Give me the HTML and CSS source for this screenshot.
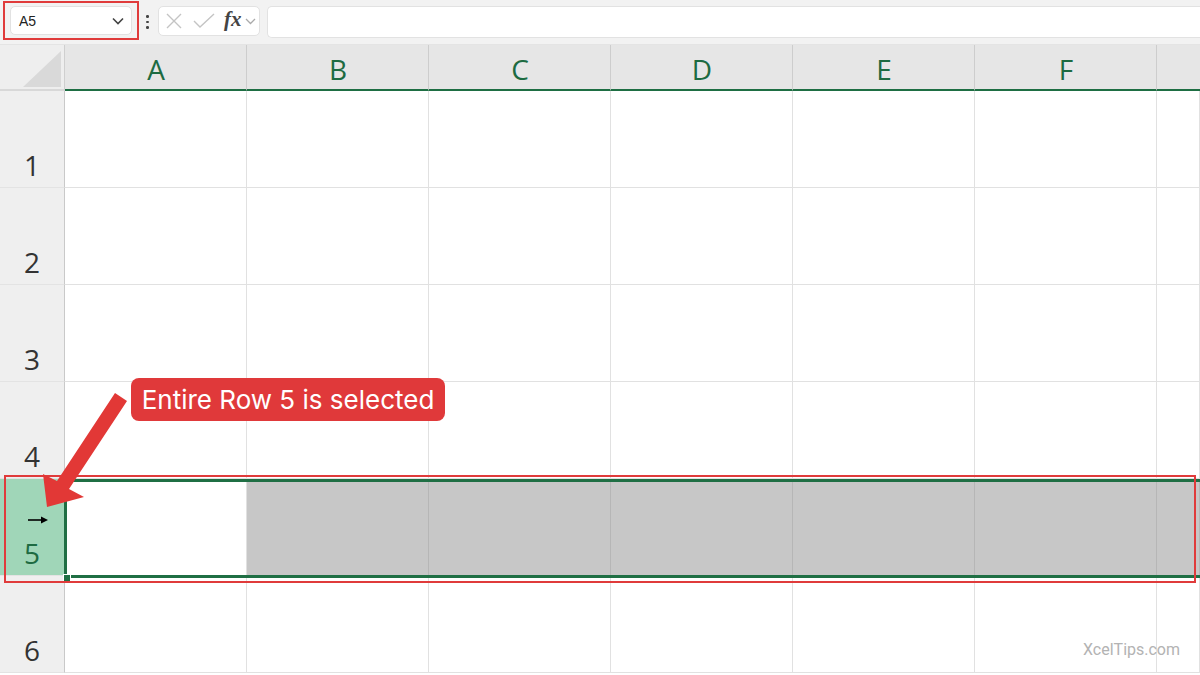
FILE: index.html
```html
<!DOCTYPE html>
<html>
<head>
<meta charset="utf-8">
<link rel="stylesheet" href="styles.css">
</head>
<body>
<div class="toolbar">
  <div class="namebox-wrap">
    <div class="namebox">
      <span class="nb-text">A5</span>
      <svg class="chev" width="12" height="8" viewBox="0 0 12 8"><path d="M1 1.5 L6 6.5 L11 1.5" fill="none" stroke="#444" stroke-width="1.6"/></svg>
    </div>
  </div>
  <div class="dots"><span></span><span></span><span></span></div>
  <div class="fbtns">
    <svg class="ic-x" width="16" height="16" viewBox="0 0 16 16"><path d="M1 1 L15 15 M15 1 L1 15" stroke="#c4c4c4" stroke-width="1.4"/></svg>
    <svg class="ic-ok" width="22" height="16" viewBox="0 0 22 16"><path d="M1 8 L7 14 L21 1" fill="none" stroke="#c4c4c4" stroke-width="1.4"/></svg>
    <span class="fx">fx</span>
    <svg width="11" height="7" viewBox="0 0 11 7"><path d="M1 1 L5.5 5.5 L10 1" fill="none" stroke="#aaa" stroke-width="1.3"/></svg>
  </div>
  <div class="finput"></div>
</div>

<div class="sheet">
  <div class="corner"><div class="tri"></div></div>
  <div class="colh">A</div><div class="colh">B</div><div class="colh">C</div><div class="colh">D</div><div class="colh">E</div><div class="colh">F</div><div class="colh last"></div>

  <div class="rowh">1</div><div class="c"></div><div class="c"></div><div class="c"></div><div class="c"></div><div class="c"></div><div class="c"></div><div class="c"></div>
  <div class="rowh">2</div><div class="c"></div><div class="c"></div><div class="c"></div><div class="c"></div><div class="c"></div><div class="c"></div><div class="c"></div>
  <div class="rowh">3</div><div class="c"></div><div class="c"></div><div class="c"></div><div class="c"></div><div class="c"></div><div class="c"></div><div class="c"></div>
  <div class="rowh">4</div><div class="c"></div><div class="c"></div><div class="c"></div><div class="c"></div><div class="c"></div><div class="c"></div><div class="c"></div>
  <div class="rowh sel">5</div><div class="c active"></div><div class="c gray"></div><div class="c gray"></div><div class="c gray"></div><div class="c gray"></div><div class="c gray"></div><div class="c gray"></div>
  <div class="rowh">6</div><div class="c"></div><div class="c"></div><div class="c"></div><div class="c"></div><div class="c"></div><div class="c"></div><div class="c"></div>
</div>

<div class="namebox-hl"></div>
<div class="row-sel"></div>
<div class="fill-handle"></div>
<div class="row-hl"></div>

<svg class="cursor" width="22" height="10" viewBox="0 0 22 10"><path d="M0 5 H15" stroke="#000" stroke-width="1.6"/><path d="M13 1.5 L20 5 L13 8.5 Z" fill="#000"/></svg>

<svg class="arrow" width="1200" height="675" viewBox="0 0 1200 675"><polygon points="115,393 127,401 69,489 84,497 47,507 43,474 57,481" fill="#e23836"/></svg>

<div class="callout">Entire Row 5 is selected</div>
<div class="watermark">XcelTips.com</div>
</body>
</html>
```

FILE: styles.css
```css
html, body {
  margin: 0;
  padding: 0;
  width: 1200px;
  height: 675px;
  overflow: hidden;
  background: #fff;
  font-family: "Open Sans", "Noto Sans", sans-serif;
  position: relative;
}

.toolbar {
  height: 45px;
  box-sizing: border-box;
  background: #f2f2f2;
  display: flex;
  align-items: flex-start;
  padding-top: 6px;
  border-bottom: 1px solid #e4e4e4;
}

.namebox-wrap {
  width: 138px;
  padding-left: 10px;
  box-sizing: border-box;
}

.namebox {
  width: 122px;
  height: 29px;
  box-sizing: border-box;
  background: #fff;
  border: 1px solid #e2e2e2;
  border-radius: 5px;
  display: flex;
  align-items: center;
  justify-content: space-between;
  padding: 0 7px 0 8px;
}

.nb-text {
  font-family: "Liberation Sans", Arial, sans-serif;
  font-size: 14px;
  color: #222;
}

.dots {
  width: 21px;
  display: flex;
  flex-direction: column;
  align-items: center;
  gap: 3px;
  padding-top: 9px;
  margin-left: -1px;
}
.dots span {
  width: 2.5px;
  height: 2.5px;
  background: #444;
  border-radius: 50%;
}

.fbtns {
  width: 102px;
  height: 30px;
  box-sizing: border-box;
  background: #fff;
  border: 1px solid #e2e2e2;
  border-radius: 5px;
  display: flex;
  align-items: center;
  padding-left: 7px;
}
.ic-ok { margin-left: 11px; }
.fx {
  font-family: "Liberation Serif", "DejaVu Serif", serif;
  font-style: italic;
  font-weight: bold;
  font-size: 21px;
  color: #444;
  margin-left: 9px;
  margin-right: 3px;
  line-height: 1;
  margin-top: -3px;
}

.finput {
  flex: 1;
  height: 30px;
  margin-left: 7px;
  background: #fff;
  border: 1px solid #e2e2e2;
  border-right: none;
  border-radius: 5px 0 0 5px;
}

.sheet {
  display: grid;
  grid-template-columns: 65px repeat(6, 182px) 1fr;
  grid-template-rows: 46px repeat(6, 97px);
}

.corner {
  background: #eeeeee;
  border-right: 1px solid #cfcfcf;
  border-bottom: 2px solid #d8d8d8;
  box-sizing: border-box;
  display: flex;
  align-items: flex-end;
  justify-content: flex-end;
  padding: 0 3px 2px 0;
}
.tri {
  width: 38px;
  height: 36px;
  background: #d9d9d9;
  clip-path: polygon(100% 0, 100% 100%, 0 100%);
}

.colh {
  background: #e6e6e6;
  border-right: 1px solid #cdcdcd;
  border-bottom: 2px solid #1e6e43;
  box-sizing: border-box;
  display: flex;
  align-items: center;
  justify-content: center;
  font-size: 28px;
  color: #1d6b41;
  padding-top: 4px;
  padding-left: 1px;
}
.colh.last { border-right: none; }

.rowh {
  background: #efefef;
  border-right: 1px solid #c9c9c9;
  border-bottom: 1px solid #e3e3e3;
  box-sizing: border-box;
  display: flex;
  align-items: flex-end;
  justify-content: center;
  font-size: 28px;
  color: #333;
  padding-bottom: 4px;
  line-height: 1.2;
}
.rowh.sel {
  background: #a0d6b8;
  color: #1e6b42;
}

.c {
  border-right: 1px solid #e1e1e1;
  border-bottom: 1px solid #e1e1e1;
  box-sizing: border-box;
}
.c.gray {
  background: #c7c7c7;
  border-right-color: #b6b6b6;
}

.namebox-hl {
  position: absolute;
  left: 3px;
  top: 1px;
  width: 136px;
  height: 39px;
  box-sizing: border-box;
  border: 2px solid #e03b3b;
}

.row-sel {
  position: absolute;
  left: 64px;
  top: 479px;
  width: 1140px;
  height: 99px;
  box-sizing: border-box;
  border: 3px solid #1f6f44;
}
.fill-handle {
  position: absolute;
  left: 63px;
  top: 574px;
  width: 6px;
  height: 6px;
  background: #1f6f44;
  border: 1px solid #fff;
}

.row-hl {
  position: absolute;
  left: 4px;
  top: 475px;
  width: 1192px;
  height: 108px;
  box-sizing: border-box;
  border: 2px solid #e03b3b;
}

.cursor {
  position: absolute;
  left: 28px;
  top: 515px;
}

.arrow {
  position: absolute;
  left: 0;
  top: 0;
}

.callout {
  position: absolute;
  left: 131px;
  top: 378px;
  width: 314px;
  height: 43px;
  box-sizing: border-box;
  background: #e0393a;
  border-radius: 8px;
  color: #fff;
  font-family: Inter, Roboto, sans-serif;
  font-size: 26px;
  display: flex;
  align-items: center;
  justify-content: center;
  padding-bottom: 1px;
  white-space: nowrap;
}

.watermark {
  position: absolute;
  left: 1083px;
  top: 640px;
  font-family: Roboto, "Liberation Sans", sans-serif;
  font-size: 16px;
  color: #b3b3b3;
}
```
